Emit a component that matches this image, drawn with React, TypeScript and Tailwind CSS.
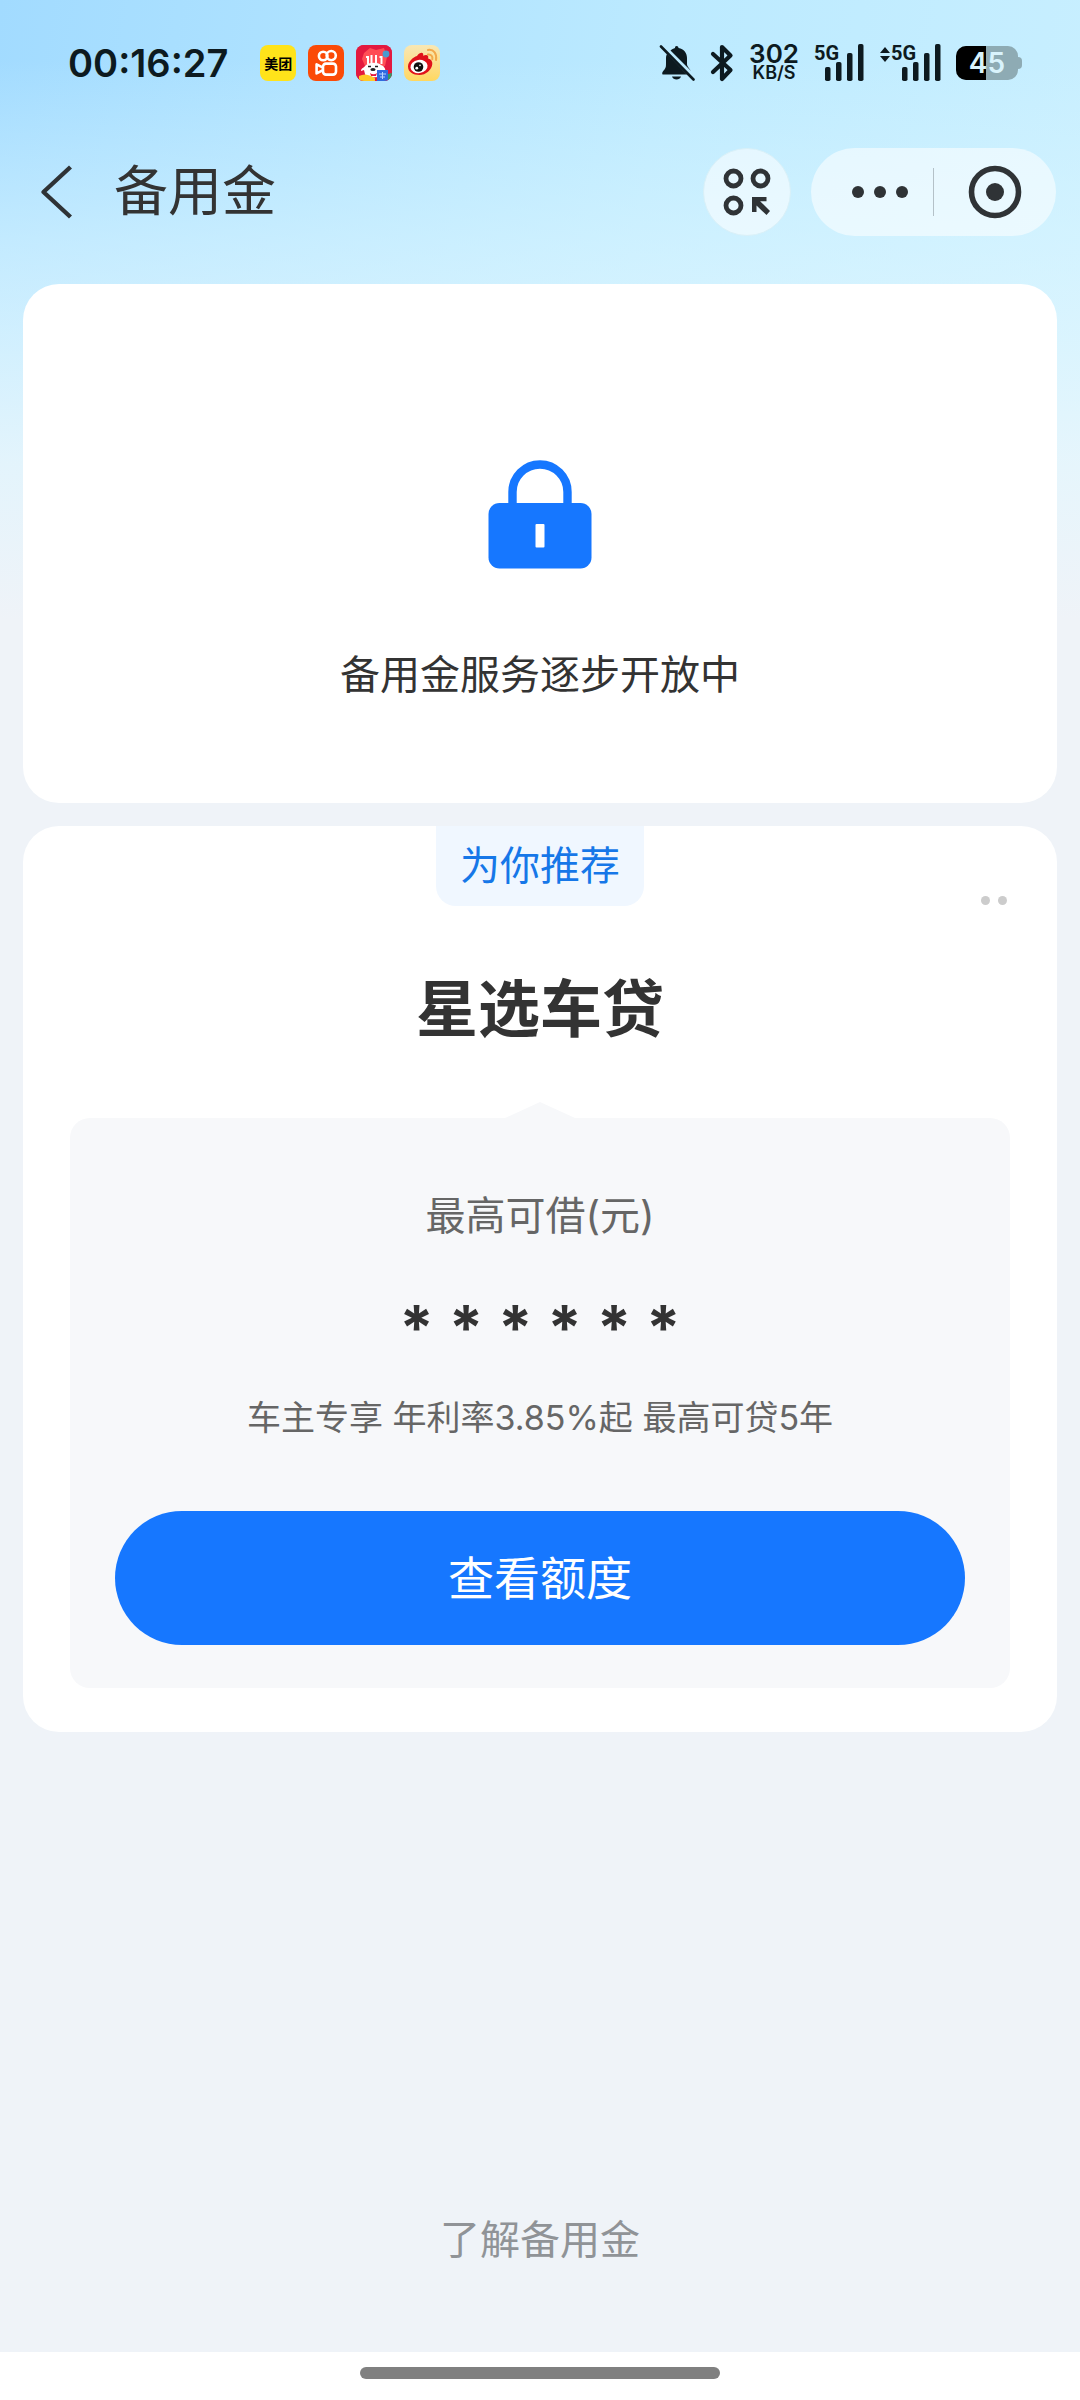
import type { ReactNode } from 'react';

const offer = {
  title: '星选车贷',
  amountLabel: '最高可借(元)',
  amount: '* * * * * *',
  summary: '车主专享 年利率3.85%起 最高可贷5年',
};

function AppBadge({ className, children }: { className: string; children: ReactNode }) {
  return (
    <span className={`flex h-9 w-9 items-center justify-center overflow-hidden rounded-lg ${className}`}>
      {children}
    </span>
  );
}

function KuaishouIcon() {
  return (
    <svg className="h-9 w-9" viewBox="0 0 36 36" fill="none" stroke="#fff" strokeWidth="2.6">
      <circle cx="15.2" cy="11" r="4.3" />
      <circle cx="23.2" cy="10.6" r="4.6" />
      <rect x="15" y="18.6" width="13" height="11" rx="3" />
      <path d="M14.5 22.4 8.6 19.4v9l5.9-3" strokeLinejoin="round" />
    </svg>
  );
}

function FestivalIcon() {
  return (
    <svg className="h-9 w-9" viewBox="0 0 36 36">
      <rect width="36" height="36" fill="#e3193f" />
      <path d="M8 8 14 3l6 2 8-2 3 9-2 9H9L6 14z" fill="#ff4d55" />
      <circle cx="30" cy="9" r="3.4" fill="#4a9bd0" />
      <path d="M10 12h2v7M15.5 10v9M20 10v9M23.5 12h2v7" stroke="#fff" strokeWidth="2" fill="none" />
      <path d="M5 26c0-3 3-3 5-6 4-3 12-3 15 0 3 1 5 4 4 6l-5-1-2 7-12 1-2-8z" fill="#fff" />
      <path d="M12 21.5h3M19 21.5h3" stroke="#222" strokeWidth="1.6" />
      <ellipse cx="17" cy="24.5" rx="2.6" ry="1.6" fill="#222" />
      <path d="M14 28c2 1.6 5 1.6 7 0l-1 3h-5z" fill="#e3193f" />
      <path d="M3 31c4-2 8-2 12 0l4 2v3H3z" fill="#ffc928" />
      <rect x="21" y="25" width="11" height="11" fill="#2f6be0" />
      <path d="M23 29h7M24 32h5M26.5 27v7" stroke="#b9d6ff" strokeWidth="1" />
      <path d="M32 29l4-1v8h-4z" fill="#2f9b67" />
    </svg>
  );
}

function WeiboIcon() {
  return (
    <svg className="h-9 w-9" viewBox="0 0 36 36" fill="none">
      <path
        d="M13 11c2-3 5-4 6-2.6.5 1 .1 2 .1 2.4 3-1.4 6-1 5 2.6 3 .8 4.5 2.8 4.2 5.6-.6 6-6.3 11-13 11C9 30 4 27 4 21.5 4 17 9 12 13 11z"
        fill="#e0121b"
      />
      <ellipse cx="15" cy="21.5" rx="8.6" ry="6.6" fill="#fff" transform="rotate(-8 15 21.5)" />
      <circle cx="14.5" cy="22" r="4.8" fill="#111" />
      <circle cx="12.8" cy="23.2" r="1.4" fill="#fff" />
      <circle cx="16" cy="20.4" r=".8" fill="#fff" />
      <path d="M24 5c6-1 9 4 8 10M24 9.5c3-.5 5 2 4.3 4.8" stroke="#f3a94a" strokeWidth="2" strokeLinecap="round" />
    </svg>
  );
}

function BellOffIcon() {
  return (
    <svg className="h-9 w-9" viewBox="0 0 36 36" fill="#0d1a20">
      <path d="M17.5 1c1.2 0 2 .8 2 2 5.5 1.2 8.5 5 8.5 10v6.5c0 1.5 2 3.5 4 6.5L11.5 5.500c1-1.200 3.200-2 4.500-2.500 0-1.200.4-2 1.500-2z" />
      <path d="M8 9 28 29.5H3.5c-1-2 .5-3 2-5C7 22.5 7 21 7 18v-4.5c0-2 .3-3.4 1-4.5z" />
      <path d="M13 31.5h9c-1 4-8 4-9 0z" />
      <path d="M2 1.5 34.5 34.5" stroke="#0d1a20" strokeWidth="2.6" strokeLinecap="round" />
    </svg>
  );
}

function BluetoothIcon() {
  return (
    <svg className="h-10 w-6" viewBox="0 0 24 40" fill="none" stroke="#0d1a20" strokeWidth="4.2" strokeLinejoin="round" strokeLinecap="round">
      <path d="M3 11 20.5 27 12 36V4l8.5 8.5L3 29" />
    </svg>
  );
}

function Signal({ transfer = false }: { transfer?: boolean }) {
  return (
    <div className="flex h-10 items-start">
      {transfer && (
        <svg className="mt-1 h-4 w-3" viewBox="0 0 12 16" fill="#0d1a20">
          <path d="M6 0 11 6H1zM1 9h10l-5 6z" />
        </svg>
      )}
      <div className="relative h-10 w-[50px]">
        <span className="absolute top-0 left-0 font-[Roboto] text-xl leading-5 font-bold">5G</span>
        <svg className="h-10 w-[50px]" viewBox="0 0 50 40" fill="#0d1a20">
          <rect x="11" y="24" width="5.5" height="14" rx="1.8" />
          <rect x="22" y="19" width="5.5" height="19" rx="1.8" />
          <rect x="33" y="10" width="5.5" height="28" rx="1.8" />
          <rect x="44" y="1" width="5.5" height="37" rx="1.8" />
        </svg>
      </div>
    </div>
  );
}

function Battery({ level }: { level: number }) {
  return (
    <div className="flex items-center" aria-label="电量">
      <div className="relative flex h-[34px] w-[62px] items-center justify-center overflow-hidden rounded-[10px] bg-[#8eabb4]">
        <div className="absolute inset-y-0 left-0 bg-black" style={{ width: `${level + 3}%` }} />
        <span className="relative text-[28px] leading-8 font-semibold text-[#d9f3fc]">{level}</span>
      </div>
      <div className="h-3 w-1 rounded-r bg-[#8eabb4]" />
    </div>
  );
}

function StatusBar() {
  return (
    <div className="flex h-[126px] items-center justify-between pr-[58px] pl-[68px] font-[Inter] text-[#0d1a20]">
      <div className="flex items-center">
        <time className="text-[38px] leading-10 font-semibold">00:16:27</time>
        <div className="ml-8 flex gap-3">
          <AppBadge className="bg-[#ffe31a]">
            <span className="font-['Noto_Sans_CJK_SC'] text-sm leading-4 font-bold text-black">美团</span>
          </AppBadge>
          <AppBadge className="bg-[#fb4a07]">
            <KuaishouIcon />
          </AppBadge>
          <AppBadge className="bg-[#e3193f]">
            <FestivalIcon />
          </AppBadge>
          <AppBadge className="bg-linear-to-b from-[#f8e7b4] to-[#ffd75e]">
            <WeiboIcon />
          </AppBadge>
        </div>
      </div>
      <div className="flex items-center gap-[15px]">
        <BellOffIcon />
        <BluetoothIcon />
        <div className="flex flex-col items-center font-semibold">
          <span className="text-[26px] leading-5">302</span>
          <span className="text-lg leading-[18px]">KB/S</span>
        </div>
        <Signal />
        <Signal transfer />
        <Battery level={45} />
      </div>
    </div>
  );
}

function NavBar() {
  return (
    <header className="flex h-[132px] items-center pr-6 pl-9">
      <button aria-label="返回" className="flex items-center">
        <svg className="h-14 w-10" viewBox="0 0 40 56" fill="none" stroke="#2f3336" strokeWidth="4.4">
          <path d="M34.5 3 7.5 28 34.5 53" strokeLinejoin="round" />
        </svg>
      </button>
      <h1 className="ml-[38px] text-[54px] leading-[72px]">备用金</h1>
      <div className="ml-auto flex gap-5">
        <button aria-label="小程序" className="flex size-[88px] items-center justify-center rounded-full border border-[#d9f0f8] bg-white/55">
          <svg className="h-12 w-12" viewBox="0 0 48 48" fill="none" stroke="#2f3336" strokeWidth="4.8">
            <circle cx="10.5" cy="10.5" r="7.5" />
            <circle cx="37.5" cy="10.5" r="7.5" />
            <circle cx="10.5" cy="37.5" r="7.5" />
            <path d="M43.5 29v4.2h-6.4L47 43l-3.5 4L33.5 37.5V44H29V29z" fill="#2f3336" stroke="none" />
          </svg>
        </button>
        <div className="flex h-[88px] items-center rounded-full bg-white/55">
          <button aria-label="更多" className="flex h-full w-[122px] items-center justify-center pl-4">
            <svg className="h-3 w-14" viewBox="0 0 56 12" fill="#2f3336">
              <circle cx="6" cy="6" r="6" />
              <circle cx="28" cy="6" r="6" />
              <circle cx="50" cy="6" r="6" />
            </svg>
          </button>
          <span className="h-12 w-px bg-[#b4c1c8]" />
          <button aria-label="关闭" className="flex h-full w-[122px] items-center justify-center">
            <svg className="h-14 w-14" viewBox="0 0 56 56" fill="#2f3336">
              <circle cx="28" cy="28" r="23.5" fill="none" stroke="#2f3336" strokeWidth="5.6" />
              <circle cx="28" cy="28" r="9" />
            </svg>
          </button>
        </div>
      </div>
    </header>
  );
}

export default function App() {
  return (
    <div className="flex min-h-screen flex-col bg-[#eff3f8] bg-[linear-gradient(to_bottom,rgba(214,245,255,0)_60px,rgba(220,246,255,0.55)_240px,rgba(224,246,254,0.75)_340px,rgba(232,246,252,0.92)_460px,#eff3f8_620px),linear-gradient(100deg,#a2dbff_0%,#bceaff_45%,#d2f3ff_100%)] font-[Inter,'Noto_Sans_CJK_SC',sans-serif] text-[#333]">
      <StatusBar />
      <NavBar />

      <main className="flex flex-1 flex-col px-[23px] pt-[26px]">
        {/* Service status */}
        <section className="flex h-[519px] flex-col items-center rounded-[36px] bg-white pt-[175px]">
          <svg className="h-[112px] w-[104px]" viewBox="0 0 104 112">
            <path d="M24.5 50V33a27.5 27.5 0 0 1 55 0v17" fill="none" stroke="#1677ff" strokeWidth="8.4" />
            <rect x="0.5" y="44" width="103" height="65.5" rx="11" fill="#1677ff" />
            <rect x="47.5" y="65" width="9" height="23.5" rx="1" fill="#fff" />
          </svg>
          <p className="mt-[76px] text-[40px] leading-[56px]">备用金服务逐步开放中</p>
        </section>

        {/* Recommended offer */}
        <section className="relative mt-[23px] flex flex-col items-center rounded-[36px] bg-white px-[47px] pb-11">
          <div className="rounded-b-[20px] bg-[#f0f7ff] px-6 pt-3 pb-3 text-[40px] leading-[56px] text-[#1677e8]">
            为你推荐
          </div>
          <button aria-label="更多选项" className="absolute top-[70px] right-[50px] flex gap-2">
            <span className="size-[9px] rounded-full bg-[#ccc]" />
            <span className="size-[9px] rounded-full bg-[#ccc]" />
          </button>
          <h2 className="mt-[60px] text-[62px] leading-[88px] font-bold">{offer.title}</h2>
          <svg className="mt-12 h-4 w-[70px]" viewBox="0 0 70 16" fill="#f7f8fa">
            <path d="M0 16 35 0l35 16z" />
          </svg>
          <div className="flex w-full flex-col items-center rounded-[20px] bg-[#f7f8fa] px-[45px] pt-[70px] pb-[43px]">
            <p className="text-[40px] leading-[56px] text-[#666]">{offer.amountLabel}</p>
            <p className="mt-14 text-[62px] leading-[56px] font-bold">{offer.amount}</p>
            <p className="mt-[38px] text-[34px] leading-[48px] text-[#666]">{offer.summary}</p>
            <button className="mt-[69px] h-[134px] w-full rounded-full bg-[#1677ff] text-[46px] leading-[64px] text-white">
              查看额度
            </button>
          </div>
        </section>

        <a href="#about" className="mt-auto mb-[84px] self-center text-[40px] leading-[56px] text-[#909397]">
          了解备用金
        </a>
      </main>

      <footer className="flex h-12 justify-center bg-white pt-[15px]">
        <div className="h-3 w-1/3 rounded-full bg-[#808080]" />
      </footer>
    </div>
  );
}
